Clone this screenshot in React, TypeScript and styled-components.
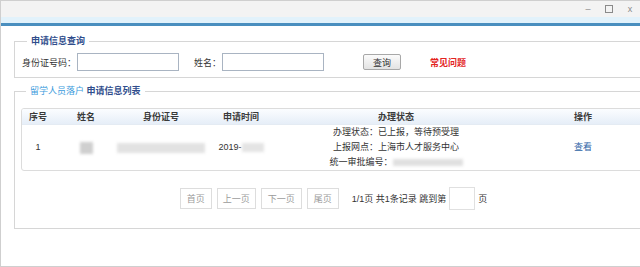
import styled, { createGlobalStyle } from 'styled-components'

const GlobalStyle = createGlobalStyle`
  html, body {
    margin: 0;
    padding: 0;
    background: #ffffff;
    overflow: hidden;
  }
  body {
    font-family: 'Liberation Sans', 'Noto Sans CJK SC', sans-serif;
    font-size: 9px;
    color: #333333;
  }
`

const Window = styled.div`
  width: 640px;
  height: 265px;
  border-top: 1px solid #cfcfcf;
  border-left: 1px solid #cfcfcf;
  border-bottom: 1px solid #cfcfcf;
  overflow: hidden;
  display: flex;
  flex-direction: column;
`

const TitleBar = styled.div`
  height: 16px;
  flex: none;
  background: #f3f3f3;
  display: flex;
  align-items: center;
  justify-content: flex-end;
  gap: 13px;
  padding-right: 7px;
  color: #8a8a8a;
`

const Control = styled.span`
  width: 8px;
  height: 8px;
  display: flex;
  align-items: center;
  justify-content: center;
  font-size: 9px;
  line-height: 8px;
`

const Accent = styled.div`
  height: 6px;
  flex: none;
  background: #e2f2fb;
  border-bottom: 3px solid #4a8fbf;
`

const Body = styled.div`
  width: 639px;
  flex: none;
  padding: 9px 0 0 13px;
  display: flex;
  flex-direction: column;
  gap: 7px;
`

const Group = styled.fieldset<{ pad: string }>`
  margin: 0;
  border: 1px solid #d6d6d6;
  padding: ${(p) => p.pad};
  min-width: 0;
`

const Legend = styled.legend`
  margin-left: 5px;
  padding: 0 4px;
  font-weight: bold;
  font-size: 9px;
  line-height: 12px;
  color: #2f4d8c;
`

const LegendLight = styled.span`
  color: #3b9bdc;
  font-weight: normal;
`

const SearchRow = styled.div`
  display: flex;
  align-items: center;
`

const Label = styled.span<{ gap?: number }>`
  margin-left: ${(p) => p.gap ?? 0}px;
  margin-right: 1px;
`

const TextInput = styled.div<{ w: number }>`
  width: ${(p) => p.w}px;
  height: 16px;
  border: 1px solid #a9b4c2;
  background: #fff;
`

const QueryButton = styled.div`
  margin-left: 39px;
  width: 36px;
  height: 14px;
  border: 1px solid #a8a8a8;
  border-radius: 2px;
  background: linear-gradient(#fbfbfb, #e3e3e3);
  display: flex;
  align-items: center;
  justify-content: center;
`

const FaqLink = styled.span`
  margin-left: 29px;
  color: #e3241f;
  font-weight: bold;
`

const TableBox = styled.div`
  border: 1px solid #dcdcdc;
  border-radius: 3px;
  overflow: hidden;
`

const Grid = styled.div`
  display: grid;
  grid-template-columns: 32px 64px 86px 74px 236px 138px;
`

const HeadCell = styled.div`
  height: 15px;
  display: flex;
  align-items: center;
  justify-content: center;
  background: linear-gradient(#fbfdff, #e6eef8);
  border-bottom: 1px solid #e4ebf3;
  color: #3a3a3a;
  font-weight: bold;
`

const Cell = styled.div`
  height: 45px;
  display: flex;
  flex-direction: column;
  align-items: center;
  justify-content: center;
  line-height: 15px;
`

const Blur = styled.span<{ w: number; h: number; tone: string }>`
  display: inline-block;
  width: ${(p) => p.w}px;
  height: ${(p) => p.h}px;
  background: ${(p) => p.tone};
  filter: blur(1.5px);
  vertical-align: middle;
`

const ViewLink = styled.span`
  color: #2d63a6;
`

const Pager = styled.div`
  margin-top: 16px;
  display: flex;
  align-items: center;
  justify-content: center;
  gap: 5px;
`

const PageButton = styled.div<{ w: number }>`
  width: ${(p) => p.w}px;
  height: 19px;
  border: 1px solid #dddddd;
  background: #fff;
  color: #9a9a9a;
  display: flex;
  align-items: center;
  justify-content: center;
`

const PageInfo = styled.span`
  margin-left: 8px;
  color: #333;
`

const JumpInput = styled.div`
  width: 24px;
  height: 21px;
  border: 1px solid #e0e0e0;
  margin: 0 -2px;
`

export default function App() {
  return (
    <>
      <GlobalStyle />
      <Window>
        <TitleBar>
          <Control>–</Control>
          <Control>
            <svg width="8" height="8" viewBox="0 0 8 8">
              <rect x="0.5" y="0.5" width="7" height="7" fill="none" stroke="#8a8a8a" />
            </svg>
          </Control>
          <Control>x</Control>
        </TitleBar>
        <Accent />
        <Body>
          <Group pad="6px 8px 6px 7px">
            <Legend>申请信息查询</Legend>
            <SearchRow>
              <Label>身份证号码：</Label>
              <TextInput w={100} />
              <Label gap={15}>姓名：</Label>
              <TextInput w={100} />
              <QueryButton>查询</QueryButton>
              <FaqLink>常见问题</FaqLink>
            </SearchRow>
          </Group>
          <Group pad="11px 6px 18px 6px">
            <Legend>
              <LegendLight>留学人员落户</LegendLight> 申请信息列表
            </Legend>
            <TableBox>
              <Grid>
                <HeadCell>序号</HeadCell>
                <HeadCell>姓名</HeadCell>
                <HeadCell>身份证号</HeadCell>
                <HeadCell>申请时间</HeadCell>
                <HeadCell>办理状态</HeadCell>
                <HeadCell>操作</HeadCell>
                <Cell>1</Cell>
                <Cell>
                  <Blur w={13} h={12} tone="#cfcfcf" />
                </Cell>
                <Cell>
                  <Blur w={88} h={10} tone="#e2e2e2" />
                </Cell>
                <Cell>
                  <span>
                    2019-<Blur w={22} h={9} tone="#e4e4e4" />
                  </span>
                </Cell>
                <Cell>
                  <span>办理状态：已上报，等待预受理</span>
                  <span>上报网点：上海市人才服务中心</span>
                  <span>
                    统一审批编号：<Blur w={70} h={7} tone="#e0e0e0" />
                  </span>
                </Cell>
                <Cell>
                  <ViewLink>查看</ViewLink>
                </Cell>
              </Grid>
            </TableBox>
            <Pager>
              <PageButton w={30}>首页</PageButton>
              <PageButton w={37}>上一页</PageButton>
              <PageButton w={39}>下一页</PageButton>
              <PageButton w={30}>尾页</PageButton>
              <PageInfo>1/1页 共1条记录 跳到第</PageInfo>
              <JumpInput />
              <span>页</span>
            </Pager>
          </Group>
        </Body>
      </Window>
    </>
  )
}
